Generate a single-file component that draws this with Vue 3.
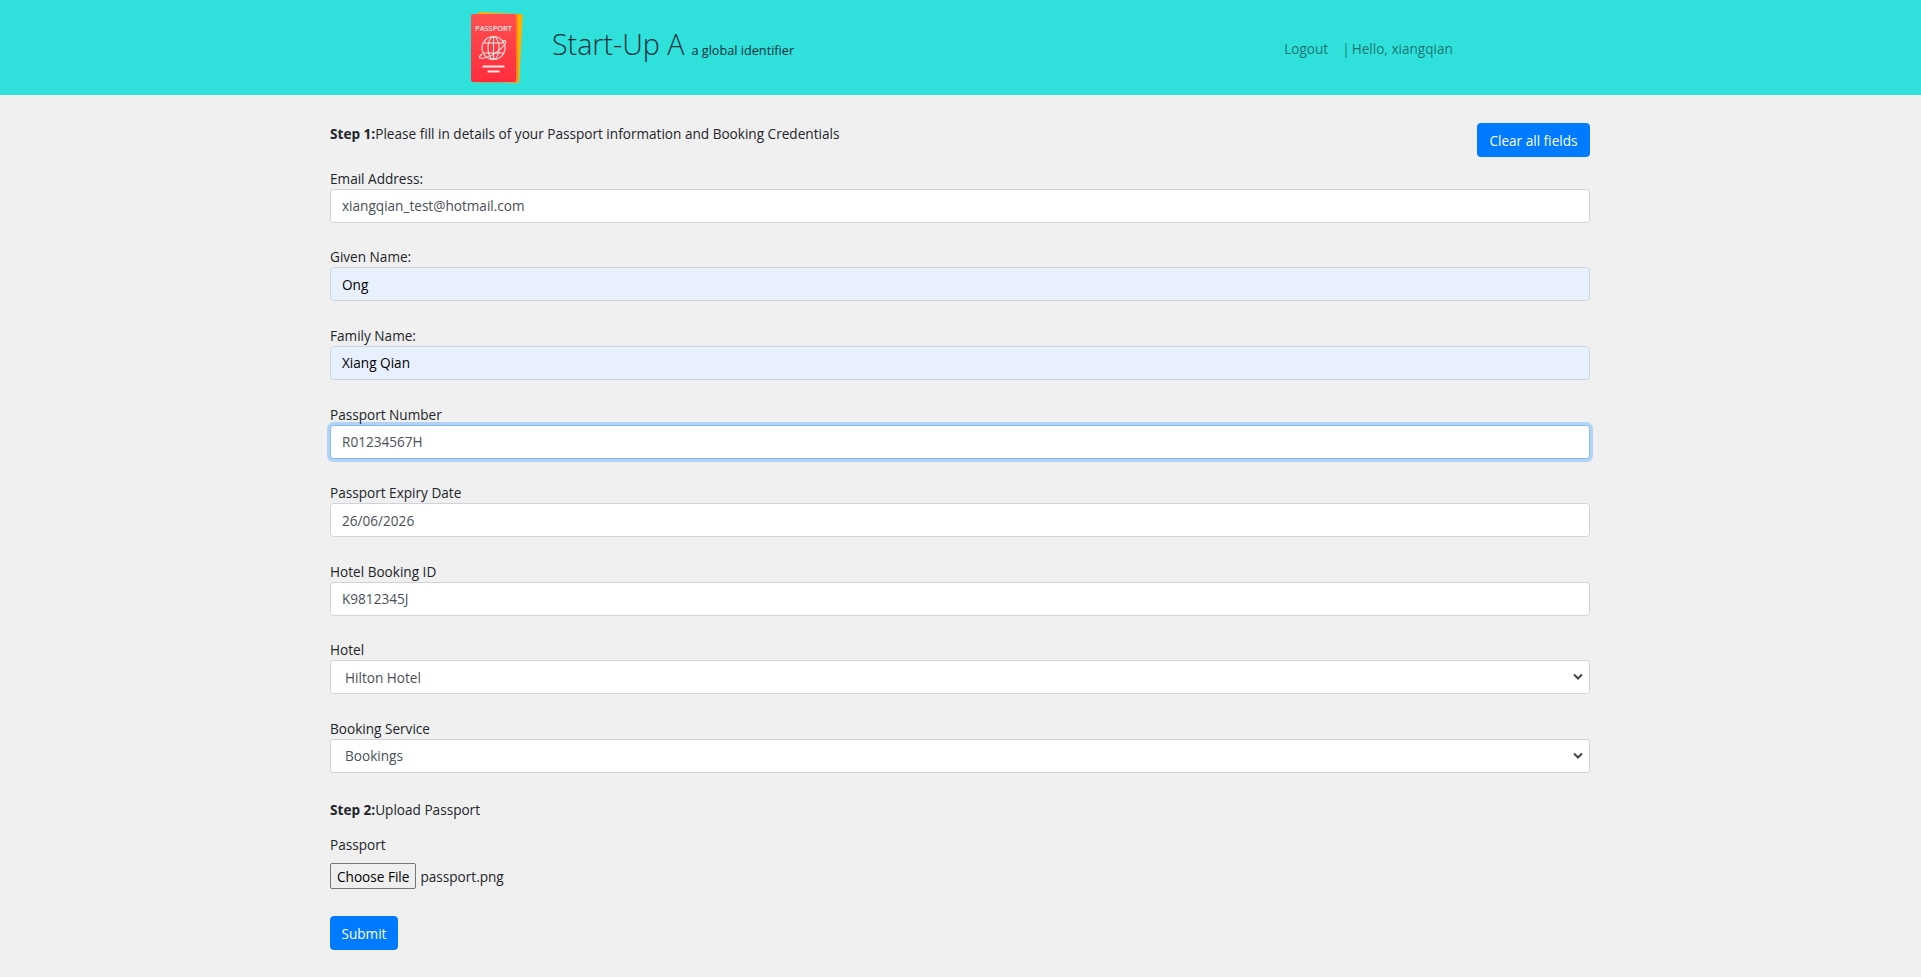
<template>
  <div class="page">
    <header class="topbar">
      <svg class="logo" viewBox="0 0 56 74" width="56" height="74">
        <defs>
          <linearGradient id="cover" x1="0" y1="0" x2="0" y2="1">
            <stop offset="0" stop-color="#ff5050" />
            <stop offset="1" stop-color="#ff2c3e" />
          </linearGradient>
        </defs>
        <rect x="7" y="2" width="45" height="69" rx="2" fill="#ffb000" transform="rotate(3 30 36)" />
        <rect x="4" y="3" width="45" height="68.5" rx="2" fill="#ff8a14" />
        <rect x="2" y="3" width="45" height="68" rx="2" fill="url(#cover)" />
        <text x="24.5" y="19.5" class="logo-text">PASSPORT</text>
        <g fill="none" stroke="#ffe8e4" stroke-width="1.1">
          <circle cx="24.5" cy="37" r="11.5" />
          <ellipse cx="24.5" cy="37" rx="5.5" ry="11.5" />
          <path d="M24.5 25.5v23M14.5 32h20M14.5 42h20" />
          <path d="M13 43c-4 3-3 5 2 4 7-1 17-8 21-14 2-3-0-4-3-3" />
        </g>
        <path d="M13.5 54.5h22v2h-22zM18.5 59.5h12v2h-12z" fill="#ffe8e4" />
      </svg>
      <div class="brand">
        <span class="brand-name">Start-Up A</span>
        <span class="brand-sub">a global identifier</span>
      </div>
      <nav class="topnav">
        <a class="nav-link">Logout</a>
        <span class="nav-bar">|</span>
        <span>Hello, xiangqian</span>
      </nav>
    </header>

    <main class="content">
      <div class="step-row">
        <p class="step"><b>Step 1:</b>Please fill in details of your Passport information and Booking Credentials</p>
        <button type="button" class="btn">Clear all fields</button>
      </div>

      <div v-for="f in fields" :key="f.label" class="field">
        <label>{{ f.label }}</label>
        <input class="control" :class="f.kind" type="text" :value="f.value" />
      </div>

      <div v-for="s in selects" :key="s.label" class="field">
        <label>{{ s.label }}</label>
        <div class="select-wrap">
          <select class="control select">
            <option>{{ s.value }}</option>
          </select>
          <svg class="chevron" viewBox="0 0 10 8" width="10" height="8">
            <path d="M1 1.5 5 5.5 9 1.5" fill="none" stroke="#444" stroke-width="2" />
          </svg>
        </div>
      </div>

      <p class="step step-two"><b>Step 2:</b>Upload Passport</p>

      <div class="upload">
        <label>Passport</label>
        <div class="file-row">
          <button type="button" class="file-btn">Choose File</button>
          <span>passport.png</span>
        </div>
      </div>

      <button type="button" class="btn btn-submit">Submit</button>
    </main>
  </div>
</template>

<script setup>
const fields = [
  { label: "Email Address:", value: "xiangqian_test@hotmail.com" },
  { label: "Given Name:", value: "Ong", kind: "autofill" },
  { label: "Family Name:", value: "Xiang Qian", kind: "autofill" },
  { label: "Passport Number", value: "R01234567H", kind: "focused" },
  { label: "Passport Expiry Date", value: "26/06/2026" },
  { label: "Hotel Booking ID", value: "K9812345J" },
];

const selects = [
  { label: "Hotel", value: "Hilton Hotel" },
  { label: "Booking Service", value: "Bookings" },
];
</script>

<style>
body {
  background: #f0f0f0;
}
</style>

<style scoped>
.page {
  font-family: "Open Sans", "Liberation Sans", sans-serif;
  font-size: 13.6px;
  line-height: 21px;
  color: #212529;
}

.topbar {
  display: flex;
  align-items: center;
  height: 95px;
  padding-left: 469px;
  background: #30e0da;
}

.logo {
  display: block;
}

.logo-text {
  font-size: 7.4px;
  font-weight: 600;
  fill: #ffe8e4;
  text-anchor: middle;
}

.brand {
  margin-left: 27px;
  margin-bottom: 8px;
  color: #06303a;
  white-space: nowrap;
}

.brand-name {
  font-size: 28.6px;
  font-weight: 300;
  line-height: 40px;
}

.brand-sub {
  margin-left: 7px;
  font-size: 12.7px;
}

.topnav {
  margin-left: 490px;
  margin-top: 1px;
  color: rgba(0, 0, 0, 0.5);
  white-space: nowrap;
}

.nav-link {
  margin-right: 14px;
}

.nav-bar {
  margin-right: 2px;
}

.content {
  width: 1260px;
  margin-left: 330px;
}

.step-row {
  display: flex;
  justify-content: space-between;
  align-items: flex-start;
  padding-top: 28px;
  height: 72.8px;
  box-sizing: border-box;
}

.step {
  margin: 0;
}

.field {
  height: 78.6px;
}

label {
  display: block;
  height: 21px;
}

.control {
  display: block;
  width: 100%;
  height: 34px;
  box-sizing: border-box;
  padding: 0 11px;
  border: 1px solid #ced4da;
  border-radius: 3.5px;
  background: #fff;
  color: #495057;
  font: inherit;
  outline: none;
}

.autofill {
  background: #e8f0fe;
  color: #000;
}

.focused {
  border-color: #80bdff;
  box-shadow: 0 0 0 3px rgba(0, 123, 255, 0.25);
}

.select-wrap {
  position: relative;
}

.select {
  appearance: none;
  padding-left: 14px;
}

.chevron {
  position: absolute;
  top: 13px;
  right: 7px;
}

.btn {
  height: 34px;
  padding: 0 11.5px;
  border: 1px solid #007bff;
  border-radius: 3.5px;
  background: #007bff;
  color: #fff;
  font: inherit;
}

.btn-submit {
  padding: 0 10.5px;
}

.step-two {
  margin-top: 2.6px;
}

.upload {
  margin-top: 14px;
  height: 82px;
}

.upload label {
  height: 29px;
}

.file-row {
  display: flex;
  align-items: center;
  gap: 4px;
}

.file-btn {
  height: 26px;
  padding: 0 6px;
  border: 1px solid #767676;
  border-radius: 2px;
  background: #efefef;
  color: #000;
  font: inherit;
}
</style>
